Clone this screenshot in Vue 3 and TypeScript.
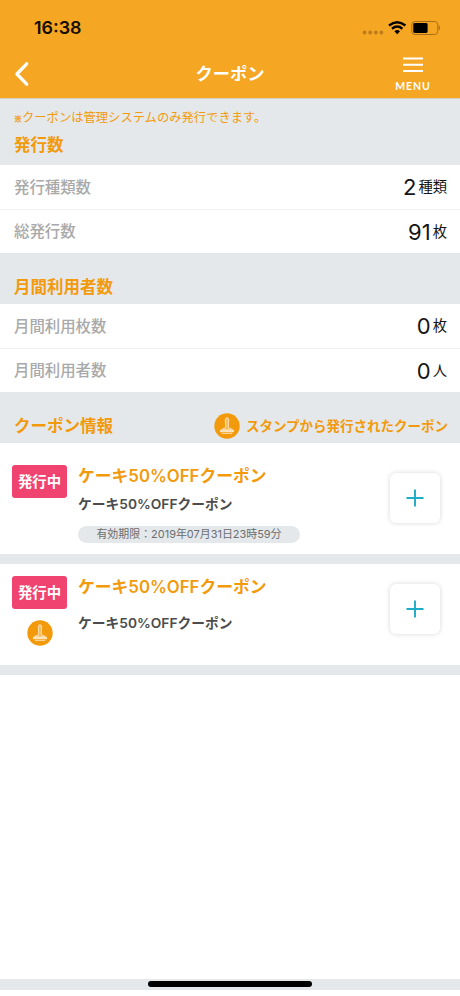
<script setup lang="ts">
import { ref } from 'vue'
import { h, type FunctionalComponent } from 'vue'

interface Stat {
  label: string
  value: string
  unit: string
}

interface Coupon {
  id: number
  title: string
  description: string
  expires?: string
  fromStamp: boolean
}

const issued: Stat[] = [
  { label: '発行種類数', value: '2', unit: '種類' },
  { label: '総発行数', value: '91', unit: '枚' },
]

const monthly: Stat[] = [
  { label: '月間利用枚数', value: '0', unit: '枚' },
  { label: '月間利用者数', value: '0', unit: '人' },
]

const coupons = ref<Coupon[]>([
  {
    id: 1,
    title: 'ケーキ50%OFFクーポン',
    description: 'ケーキ50%OFFクーポン',
    expires: '有効期限：2019年07月31日23時59分',
    fromStamp: false,
  },
  {
    id: 2,
    title: 'ケーキ50%OFFクーポン',
    description: 'ケーキ50%OFFクーポン',
    fromStamp: true,
  },
])

const StampIcon: FunctionalComponent = () =>
  h('svg', { viewBox: '0 0 26 26', width: 26, height: 26 }, [
    h('circle', { cx: 13, cy: 13, r: 12.7, fill: '#f29a0c' }),
    h('path', {
      d: 'M11.7 15.2 L11.3 7 Q11.2 4.8 13 4.8 Q14.8 4.8 14.7 7 L14.3 15.2 M11.7 14.8 Q8 15.4 7.5 17 H18.5 Q18 15.4 14.3 14.8',
      fill: '#f7bd62',
      stroke: '#fbe3bb',
      'stroke-width': 0.9,
    }),
    h('rect', { x: 5.9, y: 16.8, width: 14.2, height: 2.5, rx: 1, fill: '#fbe3bb' }),
    h('path', { d: 'M7.8 20.4 H18.2', stroke: '#fbe3bb', 'stroke-width': 0.9 }),
  ])
</script>

<template>
  <div class="screen">
    <header class="header">
      <div class="status">
        <span class="time">16:38</span>
        <svg class="indicators" width="80" height="18" viewBox="0 0 80 18">
          <g fill="#bd7b1c">
            <circle cx="4.6" cy="12.5" r="1.9" />
            <circle cx="10.2" cy="12.5" r="1.9" />
            <circle cx="15.8" cy="12.5" r="1.9" />
            <circle cx="21.4" cy="12.5" r="1.9" />
          </g>
          <g fill="none" stroke="#000" stroke-width="2.4">
            <path d="M29 5.5 Q37.2 -1 45.4 5.5" />
            <path d="M32 8.7 Q37.2 4.5 42.4 8.7" />
          </g>
          <path d="M34.4 11.2 Q37.2 9 40 11.2 L37.2 14.2 Z" />
          <rect x="51.8" y="1.5" width="26" height="13" rx="3.2" fill="none" stroke="#a96e15" stroke-width="1" />
          <rect x="53.3" y="3.1" width="14.3" height="9.8" rx="1.4" />
          <path d="M79 5.8 Q80 7.8 79 9.8 Z" fill="#a96e15" stroke="#a96e15" stroke-width=".6" />
        </svg>
      </div>
      <nav class="nav">
        <button class="back" aria-label="戻る">
          <svg width="16" height="26" viewBox="0 0 16 26">
            <path d="M12.7 2.8 L2.9 13 L12.7 23.2" fill="none" stroke="#fff" stroke-width="3.3" stroke-linecap="round" stroke-linejoin="round" />
          </svg>
        </button>
        <h1 class="title">クーポン</h1>
        <button class="menu">
          <svg width="22" height="18" viewBox="0 0 22 18">
            <path d="M1 2.5 H21 M1 8.8 H21 M1 15.1 H21" stroke="#fff" stroke-width="2" />
          </svg>
          <span>MENU</span>
        </button>
      </nav>
    </header>

    <section>
      <div class="heading first">
        <p class="note"><span class="mark">※</span>クーポンは管理システムのみ発行できます。</p>
        <h2>発行数</h2>
      </div>
      <div v-for="s in issued" :key="s.label" class="row">
        <span class="label">{{ s.label }}</span>
        <span class="amount">{{ s.value }}<small>{{ s.unit }}</small></span>
      </div>
    </section>

    <section>
      <div class="heading second"><h2>月間利用者数</h2></div>
      <div v-for="s in monthly" :key="s.label" class="row">
        <span class="label">{{ s.label }}</span>
        <span class="amount">{{ s.value }}<small>{{ s.unit }}</small></span>
      </div>
    </section>

    <section>
      <div class="heading third">
        <h2>クーポン情報</h2>
        <div class="legend"><StampIcon /><span>スタンプから発行されたクーポン</span></div>
      </div>
      <article v-for="c in coupons" :key="c.id" class="coupon" :class="{ stamped: c.fromStamp }">
        <div class="side">
          <span class="badge">発行中</span>
          <StampIcon v-if="c.fromStamp" />
        </div>
        <div class="body">
          <h3>{{ c.title }}</h3>
          <p class="desc">{{ c.description }}</p>
          <p v-if="c.expires" class="expires">{{ c.expires }}</p>
        </div>
        <button class="add" aria-label="追加">
          <svg width="18" height="18" viewBox="0 0 18 18">
            <path d="M9 .5 V17.5 M.5 9 H17.5" stroke="#1eacc6" stroke-width="1.9" />
          </svg>
        </button>
      </article>
    </section>

    <div class="blank"></div>
    <footer class="home"><div class="bar"></div></footer>
  </div>
</template>

<style>
body {
  background: #fff;
}
</style>

<style scoped>
.screen {
  width: 460px;
  height: 990px;
  display: flex;
  flex-direction: column;
  background: #fff;
  font-family: Inter, 'Noto Sans CJK JP', sans-serif;
  overflow: hidden;
}
h1, h2, h3, p {
  margin: 0;
}
button {
  border: 0;
  padding: 0;
  background: none;
  font-family: inherit;
}
svg {
  display: block;
  flex: none;
}
.header {
  height: 98px;
  flex: none;
  background: #f5a623;
}
.status {
  height: 50px;
  display: flex;
  justify-content: space-between;
  padding: 0 20px 0 34px;
}
.time {
  font-size: 17.9px;
  font-weight: 600;
  line-height: 20px;
  padding-top: 18px;
  color: #150d00;
}
.indicators {
  margin-top: 20px;
}
.nav {
  height: 46px;
  display: grid;
  grid-template-columns: 80px 1fr 80px;
}
.back {
  padding: 11px 0 0 14px;
  justify-self: start;
  align-self: start;
}
.title {
  text-align: center;
  color: #fff;
  font-size: 17.3px;
  line-height: 24px;
  padding-top: 12px;
  font-weight: 700;
}
.menu {
  display: flex;
  flex-direction: column;
  align-items: center;
  width: 40px;
  margin-left: 13px;
  padding-top: 6px;
  color: #fff;
}
.menu span {
  font-family: Lato, sans-serif;
  font-size: 10.5px;
  line-height: 12px;
  font-weight: 700;
  letter-spacing: 0.9px;
  margin-top: 6px;
}
.heading {
  background: #e5e8ea;
  color: #f29a0c;
  padding: 0 12px 0 14px;
  box-sizing: border-box;
}
.heading h2 {
  font-size: 16.5px;
  line-height: 24px;
  font-weight: 700;
}
.first {
  height: 67px;
  padding-top: 11px;
  border-top: 1px solid #d9cdb9;
}
.first h2 {
  margin-top: 5px;
}
.note {
  font-size: 12.3px;
  line-height: 18px;
  margin-top: -1px;
  white-space: nowrap;
}
.mark {
  font-family: 'Noto Sans CJK JP', sans-serif;
  font-size: 8px;
  font-weight: 700;
  -webkit-text-stroke: 0.5px currentColor;
}
.second {
  height: 51px;
  padding-top: 22px;
}
.third {
  height: 51px;
  padding-top: 16px;
  display: flex;
  justify-content: space-between;
  align-items: center;
}
.legend {
  display: flex;
  align-items: center;
  gap: 6px;
  font-size: 13.5px;
  font-weight: 700;
  line-height: 24px;
}
.row {
  height: 44px;
  box-sizing: border-box;
  display: flex;
  align-items: center;
  justify-content: space-between;
  padding: 0 13px 0 14px;
  background: #fff;
}
.row + .row {
  border-top: 1px solid #eff0f1;
}
.label {
  font-size: 15.4px;
  font-weight: 500;
  line-height: 24px;
  padding-top: 1px;
  color: #a9a9a9;
}
.amount {
  font-size: 22px;
  color: #151515;
  display: flex;
  align-items: center;
  line-height: 30px;
}
.amount small {
  font-size: 14.3px;
  line-height: 24px;
  margin-left: 2px;
}
.coupon {
  height: 121px;
  box-sizing: border-box;
  display: flex;
  padding: 22px 20px 0 12px;
  background: #fff;
  border-bottom: 10px solid #e5e8ea;
}
.coupon.stamped {
  height: 111px;
  padding-top: 12px;
}
.side {
  width: 55px;
  display: flex;
  flex-direction: column;
  align-items: center;
  gap: 11px;
}
.badge {
  width: 55px;
  height: 33px;
  border-radius: 3px;
  background: #f0436f;
  color: #fff;
  font-size: 14.4px;
  font-weight: 700;
  line-height: 33px;
  text-align: center;
}
.body {
  flex: 1;
  padding-left: 11px;
}
.body h3 {
  color: #f29a0c;
  font-size: 16.8px;
  line-height: 22px;
  font-weight: 600;
}
.desc {
  color: #4c4c4c;
  font-size: 13.75px;
  font-weight: 600;
  line-height: 20px;
  margin-top: 7px;
}
.stamped .desc {
  margin-top: 15px;
}
.expires {
  width: 222px;
  height: 17px;
  border-radius: 9px;
  margin-top: 12px;
  background: #e5e8ea;
  color: #6b6e70;
  font-size: 10.95px;
  line-height: 17px;
  text-align: center;
  white-space: nowrap;
}
.add {
  width: 50px;
  height: 50px;
  margin-top: 8px;
  border-radius: 6px;
  background: #fff;
  box-shadow: 0 0 5px rgba(0, 0, 0, 0.16);
  display: flex;
  align-items: center;
  justify-content: center;
}
.blank {
  flex: 1;
}
.home {
  height: 11px;
  background: #e5e8ea;
  display: flex;
  justify-content: center;
}
.bar {
  width: 164px;
  height: 6px;
  border-radius: 3px;
  background: #000;
  margin-top: 2px;
}
</style>
